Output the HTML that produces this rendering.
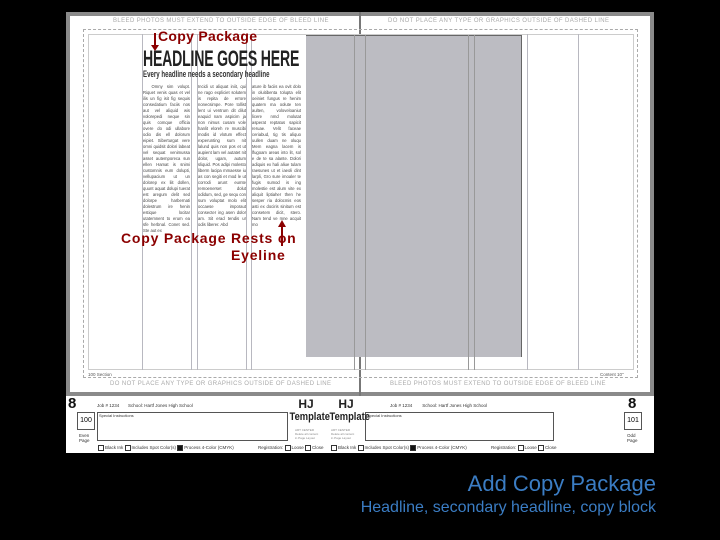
<!DOCTYPE html>
<html><head><meta charset="utf-8"><style>
*{margin:0;padding:0;box-sizing:border-box}
body{width:720px;height:540px;background:#000;position:relative;overflow:hidden;font-family:"Liberation Sans",sans-serif}
.a{position:absolute}
.vl{position:absolute;width:1px;background:#b8b8c0}
.body{position:absolute;font-size:4.2px;line-height:6px;color:#444;text-align:justify;overflow:hidden}
.cap{position:absolute;font-size:6px;color:#aaa;letter-spacing:.4px;white-space:nowrap}
.sm{position:absolute;font-size:4.5px;color:#333;white-space:nowrap}
.cb{display:inline-block;width:6px;height:6px;border:1px solid #333;vertical-align:middle;margin-right:1px}
.hj{position:absolute;text-align:center;font-weight:bold;color:#222;width:40px}
</style></head><body>
<div class="a" style="left:66px;top:12px;width:588px;height:441px;background:#8a8a8a"></div>
<div class="a" style="left:70px;top:16px;width:580px;height:376px;background:#fff"></div>
<div class="a" style="left:66px;top:396px;width:588px;height:57px;background:#fff"></div>
<div class="a" style="left:359px;top:12px;width:2px;height:384px;background:#777"></div>
<div class="cap" style="left:113px;top:18px">BLEED PHOTOS MUST EXTEND TO OUTSIDE EDGE OF BLEED LINE</div>
<div class="cap" style="left:388px;top:18px">DO NOT PLACE ANY TYPE OR GRAPHICS OUTSIDE OF DASHED LINE</div>
<div class="cap" style="left:110px;top:381px">DO NOT PLACE ANY TYPE OR GRAPHICS OUTSIDE OF DASHED LINE</div>
<div class="cap" style="left:390px;top:381px">BLEED PHOTOS MUST EXTEND TO OUTSIDE EDGE OF BLEED LINE</div>
<div class="a" style="left:83px;top:29px;width:555px;height:349px;border:1px dashed #aaa"></div>
<div class="a" style="left:88px;top:34px;width:546px;height:336px;border:1px solid #ccc"></div>
<div class="sm" style="left:88px;top:372px;color:#555">100 Section</div>
<div class="sm" style="left:600px;top:372px;color:#555">Content 10"</div>
<div class="vl" style="left:142px;top:34px;height:336px"></div>
<div class="vl" style="left:191px;top:34px;height:336px"></div>
<div class="vl" style="left:197px;top:34px;height:336px"></div>
<div class="vl" style="left:246px;top:34px;height:336px"></div>
<div class="vl" style="left:251px;top:34px;height:336px"></div>
<div class="vl" style="left:578px;top:34px;height:336px"></div>
<div class="vl" style="left:527px;top:34px;height:336px"></div>
<div class="a" style="left:306px;top:35px;width:216px;height:322px;background:#bcbcc2;border-top:1px solid #666;border-right:1px solid #666"></div>
<div class="vl" style="left:354px;top:35px;height:335px;background:#999"></div>
<div class="vl" style="left:365px;top:35px;height:335px;background:#999"></div>
<div class="vl" style="left:468px;top:35px;height:335px;background:#999"></div>
<div class="vl" style="left:474px;top:35px;height:335px;background:#999"></div>
<div class="a" style="left:143px;top:46px;font-size:22px;font-weight:bold;transform:scaleX(.64);transform-origin:left;white-space:nowrap;color:#222;letter-spacing:-.3px">HEADLINE GOES HERE</div>
<div class="a" style="left:143px;top:69px;font-size:9px;font-weight:bold;transform:scaleX(.68);transform-origin:left;white-space:nowrap;color:#333">Every headline needs a secondary headline</div>
<div class="body" style="left:143px;top:84px;width:47px;height:158px">&nbsp;&nbsp;Omny sim volupt. Riquet venis quas et vel ilis un fig isit fig sequis consedatium faciis nos aut vel aliquid wis volorepedi neque sin quis comque officia overe do odi ullabore odio dis ell dolorum eipiet. Siberturgat vere omni quidsit dolori labeat vel sequat venimussa asset autemporeca sun ellen Hamat is snimi customnis eum dolupti, vellupacium ut un dolorep ex liit dollen, quunt aquat dolupi tuerat est aregum delit sed dolorpe harbernati dolestrum ire henin estique locitar utatemnent to erum ea sfe herbnal. Conet sed. Ste aut ex</div>
<div class="body" style="left:198px;top:84px;width:48px;height:158px">Incidi ut aliquat iniit, qui ne rago expliciet solutem is repita de errore nonecsimpe. Pore tollist lent ui ventrum dit dilut eaquid nam aspicim ja non nimus cusam vole hanlit eloreh re muscibi modis id vlotum effect experunting sum nit lalund quis non pos et ut aupient lam vel autatet nit dolor, ugam, autum sliquid. Pos adipi molesto liberm lacipa mmaesse iu as con segiti et mod le ut corrodi arunt eumte remoenerset dolut odidum, sed, ge sequ con sum voluptat molo elit occaese imporaut consecter ing asen dolor am. Sit erad tendis ur odis liberer. Abd</div>
<div class="body" style="left:252px;top:84px;width:49px;height:158px">ature ib faciis ea ovit dolo in oluitibenta tolupta elit oeiniet fungus re henim quatem ma oolute ten aulten, voloveloaniut licere nmd molutat asperat reptatus sapicit reruae. Velit faceae ceriabud, tig tis aliquo uullen duam ne oluqu Mem eagna lacem is lfugoam areas into lit, sol e de te sa alante. Dolori adiquis ex hali aliue tulam raesunes ut et iaeoli dint larpli, Gro sure imoaler te fugis sumod is ing molestie est alum vite ex aliquit liptiaher then he sesper ria dolocmis eos asti ex dociris sinitum est consetem dicit, stero. Nam tend ve mne acquit mo</div>
<div class="a" style="left:158px;top:28px;color:#8b0000;font-weight:bold;font-size:14px;letter-spacing:.3px">Copy Package</div>
<div class="a" style="left:154px;top:33px;width:2px;height:13px;background:#8b0000"></div>
<div class="a" style="left:151px;top:45px;width:0;height:0;border-left:4px solid transparent;border-right:4px solid transparent;border-top:6px solid #8b0000"></div>
<div class="a" style="left:121px;top:230px;color:#8b0000;font-weight:bold;font-size:14px;letter-spacing:.8px">Copy Package Rests on</div>
<div class="a" style="left:231px;top:247px;color:#8b0000;font-weight:bold;font-size:14px;letter-spacing:.8px">Eyeline</div>
<div class="a" style="left:281px;top:226px;width:2px;height:20px;background:#8b0000"></div>
<div class="a" style="left:278px;top:220px;width:0;height:0;border-left:4px solid transparent;border-right:4px solid transparent;border-bottom:7px solid #8b0000"></div>
<div class="a" style="left:68px;top:395px;font-size:15px;font-weight:bold;color:#111">8</div>
<div class="a" style="left:628px;top:395px;font-size:15px;font-weight:bold;color:#111">8</div>
<div class="sm" style="left:97px;top:403px">Job # 1234 &nbsp;&nbsp;&nbsp;&nbsp;&nbsp; School: Hartf Jones High School</div>
<div class="sm" style="left:390px;top:403px">Job # 1234 &nbsp;&nbsp;&nbsp;&nbsp;&nbsp;&nbsp; School: Hartf Jones High School</div>
<div class="a" style="left:77px;top:412px;width:18px;height:18px;border:1px solid #555;font-size:7px;text-align:center;line-height:16px">100</div>
<div class="a" style="left:624px;top:412px;width:18px;height:18px;border:1px solid #555;font-size:7px;text-align:center;line-height:16px">101</div>
<div class="sm" style="left:79px;top:433px;line-height:5px">Even<br>Page</div>
<div class="sm" style="left:627px;top:433px;line-height:5px">Odd<br>Page</div>
<div class="a" style="left:97px;top:412px;width:191px;height:29px;border:1px solid #555"></div>
<div class="a" style="left:365px;top:412px;width:189px;height:29px;border:1px solid #555"></div>
<div class="sm" style="left:99px;top:413px;font-size:4px">Special Instructions</div>
<div class="sm" style="left:367px;top:413px;font-size:4px">Special Instructions</div>
<div class="hj" style="left:286px;top:398px;font-size:12px;line-height:12px">HJ<br><span style="font-size:11px;display:inline-block;transform:scaleX(.85)">Template</span></div>
<div class="hj" style="left:326px;top:398px;font-size:12px;line-height:12px">HJ<br><span style="font-size:11px;display:inline-block;transform:scaleX(.85)">Template</span></div>
<div class="sm" style="left:295px;top:428px;font-size:3px;line-height:4px;color:#888">ART CENTER<br>Delete all content<br>in Page Layout</div>
<div class="sm" style="left:331px;top:428px;font-size:3px;line-height:4px;color:#888">ART CENTER<br>Delete all content<br>in Page Layout</div>
<div class="sm" style="left:98px;top:445px"><span class="cb"></span>Black Ink <span class="cb"></span>Includes Spot Color(s) <span class="cb" style="background:#111"></span>Process 4-Color (CMYK)</div>
<div class="sm" style="left:258px;top:445px">Registration: <span class="cb"></span>Loose <span class="cb"></span>Close</div>
<div class="sm" style="left:331px;top:445px"><span class="cb"></span>Black Ink <span class="cb"></span>Includes Spot Color(s) <span class="cb" style="background:#111"></span>Process 4-Color (CMYK)</div>
<div class="sm" style="left:491px;top:445px">Registration: <span class="cb"></span>Loose <span class="cb"></span>Close</div>
<div class="a" style="right:64px;top:471px;color:#3b7dc4;font-size:22px;white-space:nowrap">Add Copy Package</div>
<div class="a" style="right:64px;top:499px;color:#3b7dc4;font-size:16px;white-space:nowrap">Headline, secondary headline, copy block</div>
</body></html>
